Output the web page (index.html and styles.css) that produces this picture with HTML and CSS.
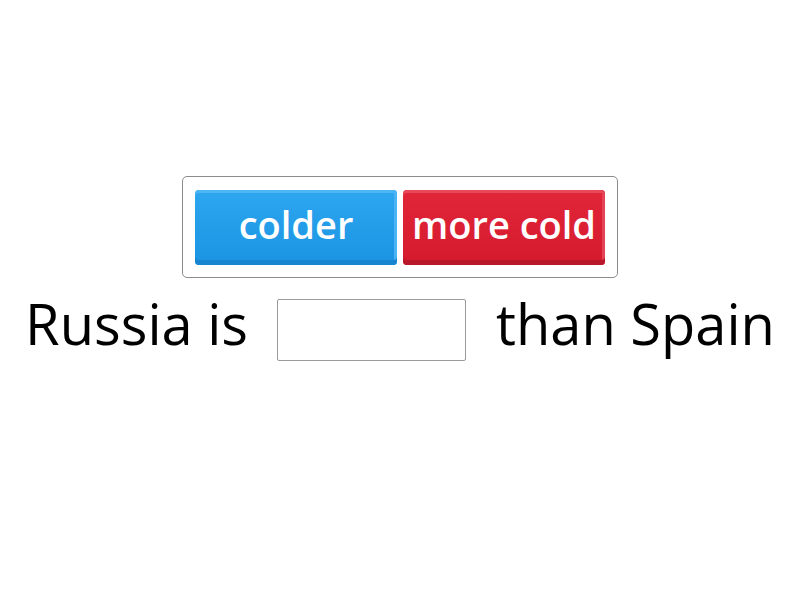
FILE: index.html
```html
<!DOCTYPE html>
<html>
<head>
<meta charset="utf-8">
<link rel="stylesheet" href="styles.css">
</head>
<body>
<main class="stage">
  <div class="bank">
    <div class="tile tile-blue">colder</div>
    <div class="tile tile-red">more cold</div>
  </div>
  <div class="sentence">
    <span class="word">Russia is</span>
    <span class="blank"></span>
    <span class="word">than Spain</span>
  </div>
</main>
</body>
</html>
```
FILE: styles.css
```css
html, body {
  margin: 0;
  padding: 0;
  background: #ffffff;
}
body {
  width: 800px;
  height: 600px;
  font-family: "Open Sans", "Noto Sans", sans-serif;
  color: #000;
}
.stage {
  display: flex;
  flex-direction: column;
  align-items: center;
  padding-top: 176px;
}
.bank {
  display: flex;
  gap: 6px;
  padding: 13px 12px 12px 12px;
  border: 1px solid #8c8c8c;
  border-radius: 5px;
}
.tile {
  width: 202px;
  height: 75px;
  box-sizing: border-box;
  border-radius: 4px;
  display: flex;
  align-items: center;
  justify-content: center;
  padding-bottom: 8px;
  color: #fff;
  font-weight: 600;
  font-size: 38px;
  white-space: nowrap;
}
.tile-blue {
  background: linear-gradient(#2ea6f0, #1a94e2);
  box-shadow: inset 0 -5px 0 #1785cf, inset -3px 0 0 #4ab4f4, inset 0 3px 0 #4cb5f4;
}
.tile-red {
  background: linear-gradient(#e2263a, #d61a2e);
  box-shadow: inset 0 -5px 0 #b8182a, inset -3px 0 0 #e54456, inset 0 3px 0 #e8495b;
}
.sentence {
  display: flex;
  align-items: flex-start;
  margin-top: 21px;
  font-size: 56px;
  line-height: 62px;
}
.word {
  white-space: nowrap;
  margin-top: -7px;
}
.blank {
  width: 189px;
  height: 62px;
  margin: 0 30px 0 29px;
  box-sizing: border-box;
  border: 1px solid #9a9a9a;
  border-radius: 2px;
}
```
